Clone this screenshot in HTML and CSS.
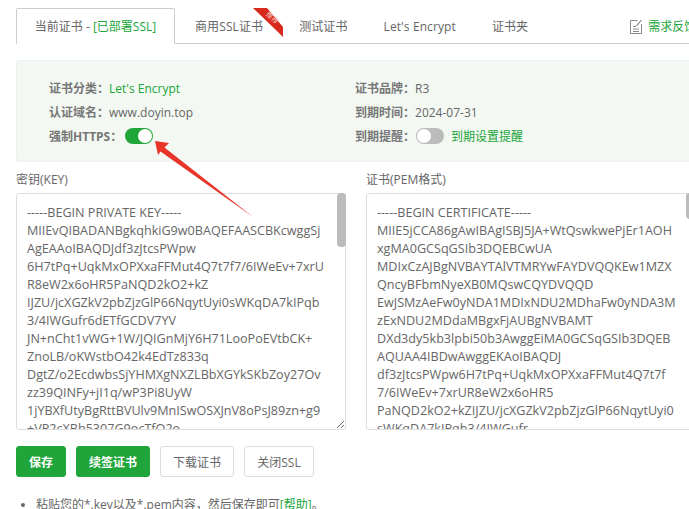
FILE: index.html
```html
<!DOCTYPE html>
<html lang="zh">
<head>
<meta charset="utf-8">
<title>SSL</title>
<link rel="stylesheet" href="styles.css">
</head>
<body>
<div class="page">
  <div class="tabs">
    <div class="tab active">当前证书 - <span class="green">[已部署SSL]</span></div>
    <div class="tab tab-ribbon">商用SSL证书
      <svg class="ribbon" width="32" height="30" viewBox="0 0 32 30">
        <path d="M0 0H14L30 19V29L25 24Z" fill="#d9291c"/>
        <text x="19" y="12" class="ribbon-text" transform="rotate(45 19 10)">推荐</text>
      </svg>
    </div>
    <div class="tab">测试证书</div>
    <div class="tab">Let's Encrypt</div>
    <div class="tab">证书夹</div>
    <div class="feedback">
      <svg width="13" height="15" viewBox="0 0 13 15" fill="none" stroke="#8a8a8a">
        <path d="M7.5 1.5H.5V14.5H11.5V5"/><path d="M3 7.5H6M3 10H9M3 12.5H9"/><path d="M6.5 7L11.5 1" stroke="#666"/>
      </svg>
      <span class="green">需求反馈</span>
    </div>
  </div>

  <div class="info">
    <div class="info-col">
      <div class="row"><b>证书分类：</b><span class="green">Let's Encrypt</span></div>
      <div class="row"><b>认证域名：</b><span>www.doyin.top</span></div>
      <div class="row"><b>强制HTTPS：</b><span class="switch on"></span></div>
    </div>
    <div class="info-col">
      <div class="row"><b>证书品牌：</b><span>R3</span></div>
      <div class="row"><b>到期时间：</b><span>2024-07-31</span></div>
      <div class="row"><b>到期提醒：</b><span class="switch"></span><span class="green remind">到期设置提醒</span></div>
    </div>
  </div>

  <div class="editors">
    <div class="editor">
      <div class="label">密钥(KEY)</div>
      <div class="box">
        <textarea class="code" wrap="off" readonly>-----BEGIN PRIVATE KEY-----
MIIEvQIBADANBgkqhkiG9w0BAQEFAASCBKcwggSj
AgEAAoIBAQDJdf3zJtcsPWpw
6H7tPq+UqkMxOPXxaFFMut4Q7t7f7/6IWeEv+7xrU
R8eW2x6oHR5PaNQD2kO2+kZ
IJZU/jcXGZkV2pbZjzGlP66NqytUyi0sWKqDA7kIPqb
3/4IWGufr6dETfGCDV7YV
JN+nCht1vWG+1W/JQIGnMjY6H71LooPoEVtbCK+
ZnoLB/oKWstbO42k4EdTz833q
DgtZ/o2EcdwbsSjYHMXgNXZLBbXGYkSKbZoy27Ov
zz39QINFy+jI1q/wP3Pi8UyW
1jYBXfUtyBgRttBVUlv9MnISwOSXJnV8oPsJ89zn+g9
+VP2cXBh5307G9ocTfO2o</textarea>
        <span class="thumb thumb-key"></span>
      </div>
    </div>
    <div class="editor editor-pem">
      <div class="label">证书(PEM格式)</div>
      <div class="box">
        <textarea class="code" wrap="off" readonly>-----BEGIN CERTIFICATE-----
MIIE5jCCA86gAwIBAgISBJ5JA+WtQswkwePjEr1AOH
xgMA0GCSqGSIb3DQEBCwUA
MDIxCzAJBgNVBAYTAlVTMRYwFAYDVQQKEw1MZX
QncyBFbmNyeXB0MQswCQYDVQQD
EwJSMzAeFw0yNDA1MDIxNDU2MDhaFw0yNDA3M
zExNDU2MDdaMBgxFjAUBgNVBAMT
DXd3dy5kb3lpbi50b3AwggEiMA0GCSqGSIb3DQEB
AQUAA4IBDwAwggEKAoIBAQDJ
df3zJtcsPWpw6H7tPq+UqkMxOPXxaFFMut4Q7t7f
7/6IWeEv+7xrUR8eW2x6oHR5
PaNQD2kO2+kZIJZU/jcXGZkV2pbZjzGlP66NqytUyi0
sWKqDA7kIPqb3/4IWGufr</textarea>
        <span class="thumb thumb-pem"></span>
      </div>
    </div>
  </div>

  <div class="actions">
    <button class="btn primary btn-save">保存</button>
    <button class="btn primary btn-renew">续签证书</button>
    <button class="btn btn-down">下载证书</button>
    <button class="btn btn-close">关闭SSL</button>
  </div>

  <ul class="tips">
    <li>粘贴您的*.key以及*.pem内容，然后保存即可<span class="green">[帮助]</span>。</li>
  </ul>
</div>

<svg class="arrow" width="110" height="90" viewBox="0 0 110 90">
  <path d="M0 0L14 2L9.5 6.5L98 76L5.5 10.5L3 14Z" fill="#e9342a"/>
</svg>
</body>
</html>
```

FILE: styles.css
```css
* { box-sizing: border-box; }
html, body { margin: 0; height: 100%; overflow: hidden; background: #fff; }
body { font-family: "Open Sans", "Noto Sans CJK SC", sans-serif; font-size: 12px; color: #666; }
.page { width: 760px; padding: 8px 0 0 16px; }
.green { color: #20a53a; }

.tabs { display: flex; height: 36px; border-bottom: 1px solid #ccc; width: 744px; align-items: stretch; }
.tab { height: 36px; line-height: 37px; padding: 0 18px; white-space: nowrap; position: relative; color: #666; letter-spacing: .1px; }
.tab.active { width: 159px; padding: 0; text-align: center; background: #fff; border: 1px solid #ccc; border-bottom: 1px solid #fff; border-radius: 2px 2px 0 0; line-height: 35px; letter-spacing: 0; }
.tab-ribbon { margin-left: 2px; }
.ribbon { position: absolute; left: 76px; top: 0; }
.ribbon-text { font-size: 7px; fill: #f5c9c5; text-anchor: middle; }
.feedback { margin-left: 84px; display: flex; align-items: center; gap: 5px; padding-top: 1px; }

.info { margin-top: 16px; width: 744px; height: 102px; padding: 15px 32px; display: flex; background: #f3f8f3; border: 1px solid #eef2ee; border-radius: 3px; }
.info-col { width: 306px; }
.row { height: 24px; display: flex; align-items: center; }
.row b { font-weight: 700; color: #777; }
.switch { display: inline-block; width: 28px; height: 16px; border-radius: 8px; background: #bbb; position: relative; margin-left: 1px; }
.switch::after { content: ""; position: absolute; left: 1px; top: 1px; width: 14px; height: 14px; border-radius: 50%; background: #fff; }
.switch.on { background: #20a53a; margin-left: 3px; }
.switch.on::after { left: 13px; }
.remind { margin-left: 7px; }

.editors { display: flex; gap: 20px; margin-top: 9px; }
.editor { width: 330px; }
.editor-pem { width: 340px; }
.label { height: 22px; line-height: 18px; }
.box { position: relative; height: 237px; }
.code { display: block; width: 100%; height: 100%; padding: 10px; border: 1px solid #ddd; border-radius: 3px; font: inherit; font-size: 12.6px; line-height: 18px; color: #666; overflow: hidden; resize: both; outline: none; background: #fff; }
.thumb { position: absolute; top: 0; width: 9px; border-radius: 4px; background: #bbb; }
.thumb-key { right: 0; height: 54px; }
.thumb-pem { left: 320px; height: 26px; }

.actions { display: flex; gap: 10px; margin-top: 16px; }
.btn { height: 31px; font: inherit; font-size: 12px; padding: 0; border-radius: 3px; border: 1px solid #ddd; background: #fff; color: #666; }
.btn.primary { background: #20a53a; border-color: #20a53a; color: #fff; font-weight: 700; }
.btn-save { width: 50px; }
.btn-renew { width: 74px; }
.btn-down { width: 74px; }
.btn-close { width: 70px; }

.tips { margin: 16px 0 0; padding: 0 0 0 20px; line-height: 24px; }
.arrow { position: absolute; left: 155px; top: 141px; }
```
